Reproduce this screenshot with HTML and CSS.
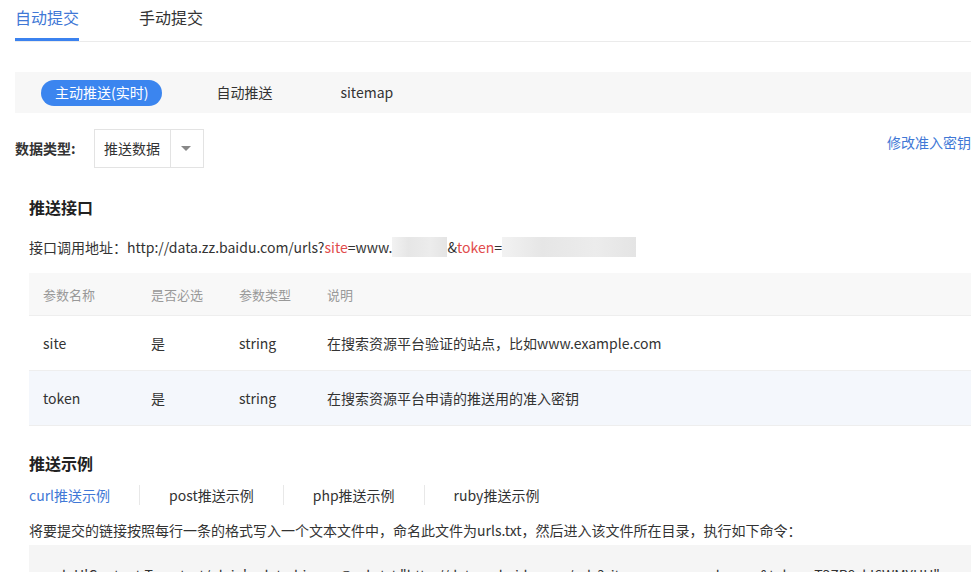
FILE: index.html
```html
<!DOCTYPE html>
<html lang="zh-CN">
  <head>
    <meta charset="UTF-8" />
    <meta name="viewport" content="width=device-width, initial-scale=1.0" />
    <title>自动提交 - 主动推送</title>
    <link rel="stylesheet" href="styles.css">
  </head>
  <body>
    <div class="page">
      <div class="tabs">
        <a class="tab active">自动提交</a>
        <a class="tab">手动提交</a>
      </div>

      <div class="subnav">
        <span class="pill active">主动推送(实时)</span>
        <span class="pill">自动推送</span>
        <span class="pill">sitemap</span>
      </div>

      <div class="filter">
        <span class="filterLabel">数据类型:</span>
        <div class="select">
          <span class="selectValue">推送数据</span>
          <span class="selectArrow"></span>
        </div>
        <a class="keyLink">修改准入密钥</a>
      </div>

      <section class="block">
        <h3>推送接口</h3>
        <p class="addr">
          接口调用地址：http://data.zz.baidu.com/urls?<span class="red">site</span>=www.<span class="masked short"></span>&amp;<span class="red">token</span>=<span class="masked long"></span>
        </p>

        <table class="params">
          <thead>
            <tr>
              <th class="colName">参数名称</th>
              <th class="colReq">是否必选</th>
              <th class="colType">参数类型</th>
              <th>说明</th>
            </tr>
          </thead>
          <tbody>
            <tr>
              <td>site</td>
              <td>是</td>
              <td>string</td>
              <td>在搜索资源平台验证的站点，比如www.example.com</td>
            </tr>
            <tr class="hover">
              <td>token</td>
              <td>是</td>
              <td>string</td>
              <td>在搜索资源平台申请的推送用的准入密钥</td>
            </tr>
          </tbody>
        </table>
      </section>

      <section class="block examples">
        <h3>推送示例</h3>
        <div class="exTabs">
          <span class="exTab active">curl推送示例</span>
          <span class="exTab">post推送示例</span>
          <span class="exTab">php推送示例</span>
          <span class="exTab">ruby推送示例</span>
        </div>
        <p class="desc">将要提交的链接按照每行一条的格式写入一个文本文件中，命名此文件为urls.txt，然后进入该文件所在目录，执行如下命令：</p>
        <pre class="code">curl -H'Content-Type:text/plain' --data-binary @urls.txt "http://data.zz.baidu.com/urls?site=www.example.com&amp;token=T3ZR8xkI6WMYHU"</pre>
      </section>
    </div>
  </body>
</html>
```

FILE: styles.css
```css
body,
html {
  margin: 0;
  padding: 0;
  background-color: #fff;
  font-family: 'Noto Sans CJK SC', 'Noto Sans', sans-serif;
  color: #333;
  font-size: 14px;
  overflow: hidden;
}

.page {
  padding: 0 5px 0 15px;
}

a {
  text-decoration: none;
  cursor: pointer;
}

/* top tabs */
.tabs {
  display: flex;
  gap: 60px;
  border-bottom: 1px solid #ebebeb;
}

.tab {
  padding: 6px 0 10px;
  line-height: 22px;
  font-size: 16px;
  color: #333;
  border-bottom: 3px solid transparent;
}

.tab.active {
  color: #4178d6;
  border-bottom-color: #3b82ef;
}

/* sub navigation */
.subnav {
  display: flex;
  align-items: center;
  gap: 40px;
  height: 41px;
  margin-top: 30px;
  padding-left: 26px;
  background-color: #f7f7f7;
}

.pill {
  padding: 0 14px;
  height: 26px;
  line-height: 25px;
  border-radius: 13px;
  color: #333;
}

.pill.active {
  background-color: #3b85ef;
  color: #fff;
}

/* data type filter */
.filter {
  display: flex;
  align-items: flex-start;
  margin-top: 16px;
}

.filterLabel {
  width: 79px;
  line-height: 39px;
  font-weight: 700;
  font-size: 14px;
  color: #333;
}

.select {
  display: flex;
  width: 110px;
  height: 39px;
  box-sizing: border-box;
  border: 1px solid #e3e3e3;
}

.selectValue {
  width: 76px;
  padding-left: 9px;
  box-sizing: border-box;
  line-height: 37px;
  border-right: 1px solid #e3e3e3;
}

.selectArrow {
  flex: 1;
  position: relative;
}

.selectArrow::after {
  content: '';
  position: absolute;
  left: 10px;
  top: 16px;
  border-left: 5px solid transparent;
  border-right: 5px solid transparent;
  border-top: 5px solid #888;
}

.keyLink {
  margin-left: auto;
  margin-top: 3px;
  line-height: 20px;
  color: #4178d6;
}

/* sections */
.block {
  padding-left: 14px;
}

h3 {
  margin: 0;
  font-size: 16px;
  line-height: 24px;
  font-weight: 700;
  color: #222;
}

.block h3 {
  margin-top: 27px;
}

.addr {
  margin: 17px 0 0;
  line-height: 22px;
  display: flex;
  align-items: center;
  white-space: nowrap;
}

.red {
  color: #e14c4c;
}

.masked {
  display: inline-block;
  height: 20px;
  background: linear-gradient(90deg, #f2f2f2, #e6e6e6 30%, #ececec 70%, #e4e4e4);
}

.masked.short {
  width: 55px;
}

.masked.long {
  width: 134px;
}

/* params table */
.params {
  width: 100%;
  margin-top: 15px;
  border-collapse: collapse;
}

.params th,
.params td {
  text-align: left;
  padding: 0 0 0 14px;
  border-bottom: 1px solid #eeeeee;
}

.params th {
  height: 42px;
  font-weight: 400;
  font-size: 13px;
  color: #999;
  background-color: #f8f8f8;
}

.params td {
  height: 54px;
  color: #333;
}

.params tr.hover td {
  background-color: #f4f7fc;
}

.colName {
  width: 94px;
}

.colReq,
.colType {
  width: 74px;
}

/* examples */
.examples h3 {
  margin-top: 25px;
}

.exTabs {
  display: flex;
  align-items: center;
  margin-top: 10px;
}

.exTab {
  padding: 0 29px;
  line-height: 20px;
  border-left: 1px solid #e8e8e8;
  color: #333;
}

.exTab:first-child {
  padding-left: 0;
  border-left: 0;
}

.exTab.active {
  color: #4178d6;
}

.desc {
  margin: 15px 0 0;
  line-height: 20px;
}

.code {
  margin: 5px 0 0;
  padding: 20px 12px;
  background-color: #f5f5f5;
  font-family: 'Noto Sans CJK SC', 'Noto Sans', sans-serif;
  font-size: 14px;
  line-height: 20px;
  color: #333;
  white-space: nowrap;
  overflow: hidden;
}
```
